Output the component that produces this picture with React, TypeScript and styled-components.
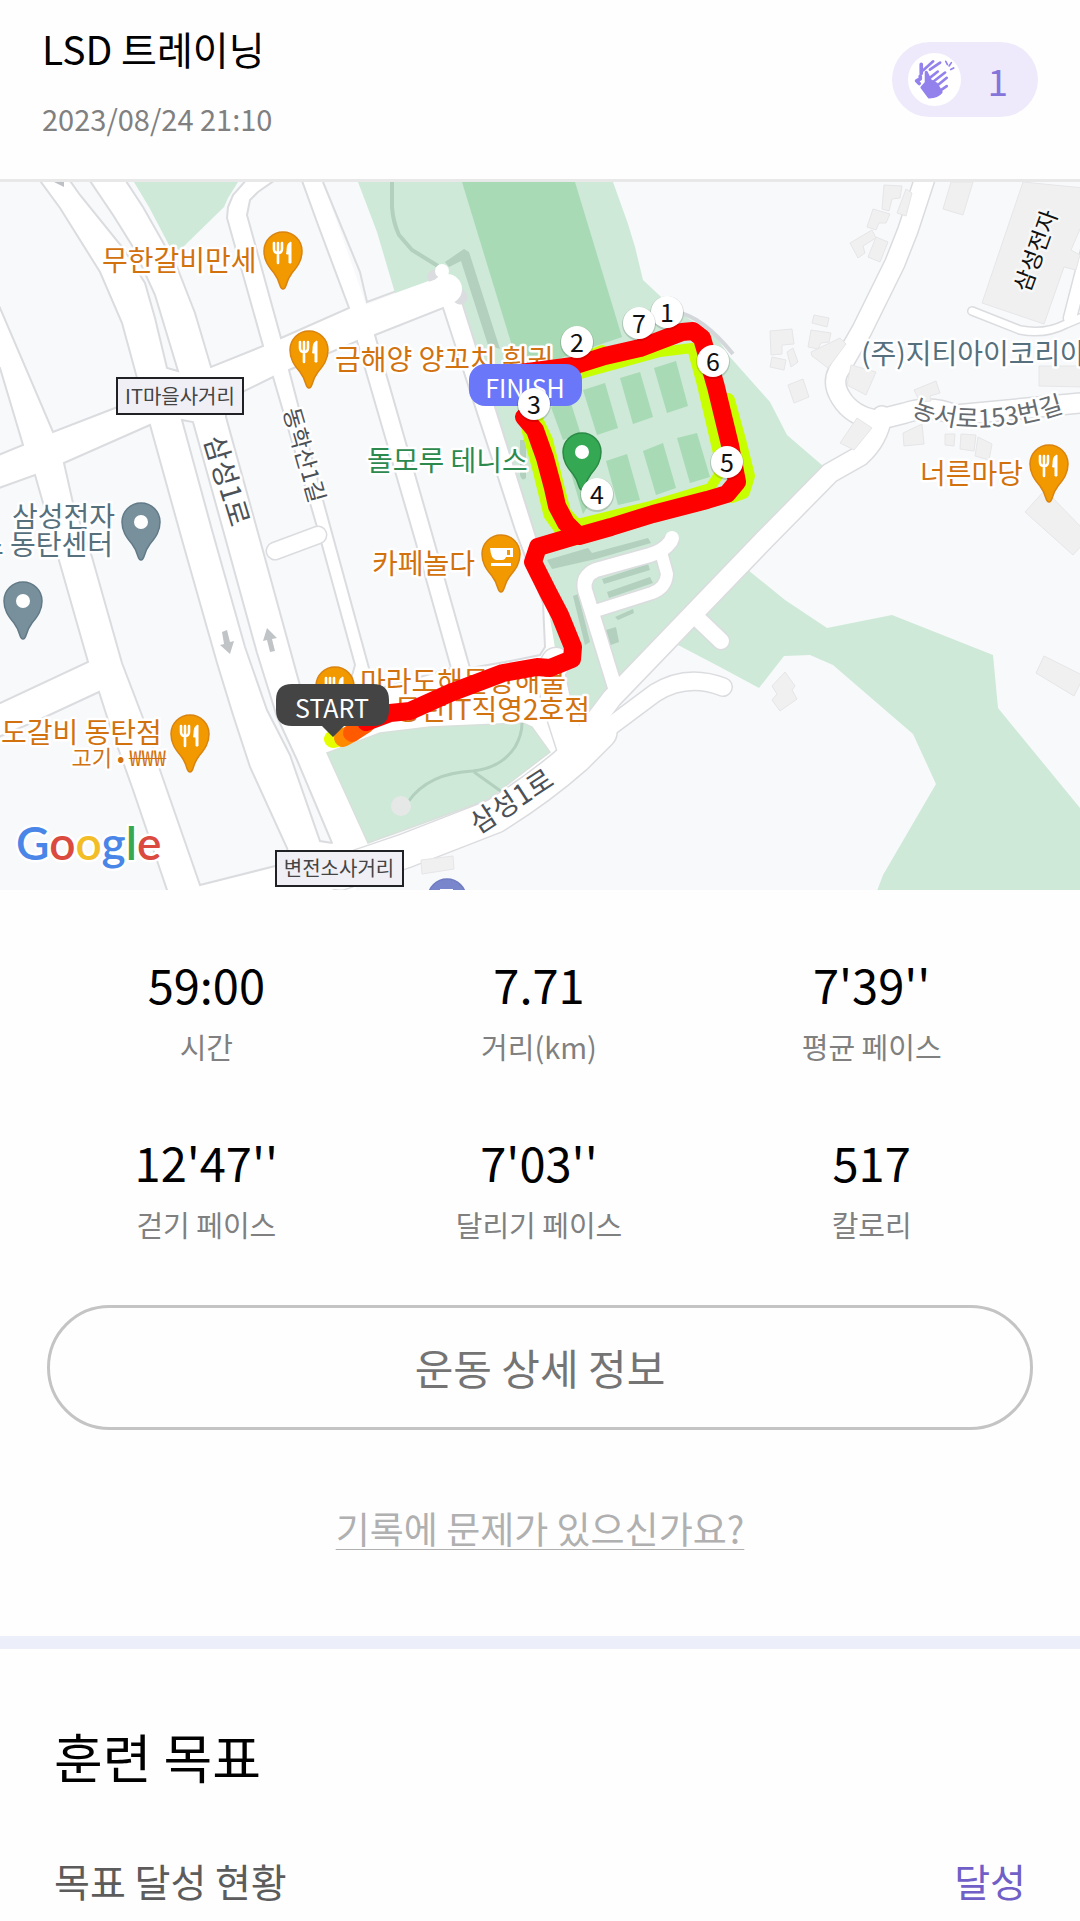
import React from 'react';
import styled, { createGlobalStyle } from 'styled-components';

const GlobalStyle = createGlobalStyle`
  * { box-sizing: border-box; }
  body {
    margin: 0;
    background: #fefefe;
    color: #000;
    font-family: "Noto Sans CJK KR", "Noto Sans", sans-serif;
  }
`;

const Page = styled.main`
  width: 100%;
  overflow: hidden;
`;

const Header = styled.header`
  display: flex;
  justify-content: space-between;
  align-items: flex-start;
  padding: 18px 42px 39px;
  border-bottom: 3px solid #e8e8e8;
`;

const HeaderText = styled.div`
  display: flex;
  flex-direction: column;
  gap: 18px;
`;

const Title = styled.h1`
  margin: 0;
  font-size: 39px;
  line-height: 60px;
  font-weight: 400;
`;

const DateText = styled.time`
  font-size: 29px;
  line-height: 44px;
  color: #808080;
`;

const CheerButton = styled.button`
  display: flex;
  align-items: center;
  gap: 26px;
  height: 75px;
  margin: 24px 0 0;
  padding: 0 30px 0 16px;
  border: 0;
  border-radius: 38px;
  background: #eeeafc;
  color: #8575db;
  font-family: inherit;
  font-size: 37px;
  line-height: 54px;
`;

const ClapBadge = styled.span`
  display: flex;
  width: 53px;
  height: 53px;
  border-radius: 50%;
  background: #fff;
`;

const MapFigure = styled.figure`
  margin: 0;
  background: #f8f9fb;
`;

const MapSvg = styled.svg`
  display: block;
  width: 100%;
  height: auto;
`;

const MapText = styled.text<{ $size?: number; $color: string; $halo?: string }>`
  font-size: ${(p) => p.$size ?? 28}px;
  font-weight: 400;
  fill: ${(p) => p.$color};
  stroke: ${(p) => p.$halo ?? '#fff'};
  stroke-width: 5px;
  stroke-linejoin: round;
  paint-order: stroke;
`;

const PlainText = styled.text<{ $size: number; $color: string }>`
  font-size: ${(p) => p.$size}px;
  fill: ${(p) => p.$color};
  text-anchor: middle;
`;

const LogoText = styled.text`
  font-family: Lato, "Open Sans", sans-serif;
  font-size: 46px;
  font-weight: 600;
  stroke: #fff;
  stroke-width: 5px;
  stroke-linejoin: round;
  paint-order: stroke;
`;

const Summary = styled.section`
  display: flex;
  flex-direction: column;
  padding: 62px 0 81px;
`;

const Stats = styled.dl`
  display: grid;
  grid-template-columns: repeat(3, 1fr);
  row-gap: 62px;
  margin: 0;
  padding: 0 42px 0 40px;
`;

const Stat = styled.div`
  display: flex;
  flex-direction: column-reverse;
  align-items: center;
  gap: 8px;
`;

const StatLabel = styled.dt`
  font-size: 29px;
  line-height: 44px;
  color: #808080;
`;

const StatValue = styled.dd`
  margin: 0;
  font-size: 47px;
  line-height: 64px;
`;

const DetailButton = styled.button`
  height: 125px;
  margin: 59px 47px 0;
  padding: 0 0 2px;
  border: 3px solid #c4c4c4;
  border-radius: 63px;
  background: #fefefe;
  color: #747474;
  font-family: inherit;
  font-size: 42px;
  line-height: 60px;
`;

const HelpLink = styled.a`
  align-self: center;
  margin-top: 71px;
  color: #b0b0b0;
  font-size: 37px;
  line-height: 54px;
  text-decoration: underline;
  text-decoration-thickness: 1px;
  text-underline-offset: 5px;
  text-decoration-skip-ink: none;
`;

const Goal = styled.section`
  display: flex;
  flex-direction: column;
  gap: 58px;
  padding: 69px 54px 13px;
  border-top: 13px solid #eceffa;
`;

const GoalTitle = styled.h2`
  margin: 0;
  font-size: 53px;
  line-height: 76px;
  font-weight: 400;
`;

const GoalRow = styled.div`
  display: flex;
  justify-content: space-between;
  font-size: 39px;
  line-height: 56px;
  color: #5c5c5c;
`;

const GoalState = styled.strong`
  font-weight: 400;
  color: #705fc6;
`;

const stats = [
  { value: '59:00', label: '시간' },
  { value: '7.71', label: '거리(km)' },
  { value: "7'39''", label: '평균 페이스' },
  { value: "12'47''", label: '걷기 페이스' },
  { value: "7'03''", label: '달리기 페이스' },
  { value: '517', label: '칼로리' },
];

const ORANGE = '#d1720f';
const SLATE = '#56707d';
const ROAD_TEXT = '#4b5157';
const PARK = '#cee9d7';
const FIELD = '#a8dab5';
const SHADE = '#b3cfbe';
const EDGE = '#dbdcdf';

const blocks = [
  '-4,178 38,178 60,208 100,272 122,323 137,378 140,398 115,408 53,432 0,308 -4,300',
  '-4,365 0,368 23,445 -4,456',
  '-4,489 35,475 43,503 58,557 88,662 -4,705',
  '64,463 150,425 182,540 217,663 233,715 250,767 287,848 291,862 200,885 160,770 143,718 122,663 92,557 73,503',
  '-4,738 43,718 99,692 108,720 133,790 168,893 -4,893',
  '68,178 80,195 123,248 145,283 155,318 167,368 178,371 155,295 133,247 113,215 88,178',
  '182,420 193,422 223,530 257,653 277,717 297,760 332,843 320,841 290,755 267,710 253,670 245,647 212,530',
  '124,178 143,207 177,267 195,313 211,367 263,346 227,218 228,207 233,195 248,178',
  '247,215 250,200 258,192 278,178 301,178 318,225 349,308 281,338',
  '226,400 273,377 317,527 355,665 345,700 304,700 260,540 226,417',
  '289,370 357,341 415,540 451,668 375,690 323,500',
  '375,335 443,308 515,530 543,603 545,647 540,655 505,662 470,668 431,530',
];

const buildings = [
  '884,185 902,186 900,198 892,199 889,211 882,209',
  '906,189 912,193 906,216 897,213',
  '873,209 890,214 886,223 879,223 876,230 867,227',
  '850,243 872,230 876,238 863,246 865,253 858,258',
  '876,237 888,242 880,262 868,257',
  '951,182 973,182 963,215 943,209',
  '1023,182 1084,188 1084,220 1071,250 1080,255 1076,270 1064,267 1044,324 982,303',
  '770,331 792,329 794,344 782,345 782,354 771,355',
  '814,315 829,318 827,327 812,323',
  '811,330 831,333 829,342 821,343 818,349 808,347',
  '787,352 793,348 798,362 791,367',
  '772,357 786,360 784,370 770,367',
  '788,385 803,379 809,397 794,403',
  '811,352 840,338 846,344 828,368 812,356',
  '851,365 876,372 866,395 847,385',
  '914,390 936,381 940,393 930,396 931,401 920,402',
  '857,418 872,428 854,450 840,443',
  '1039,366 1084,366 1084,387 1039,386',
  '903,433 922,424 924,444 904,446',
  '945,434 955,434 954,446 945,445',
  '961,434 976,435 974,451 960,449',
  '978,437 992,444 989,460 975,456',
  '1045,490 1025,512 1073,555 1084,543 1084,530',
  '785,672 795,686 792,690 797,699 780,711 772,700 777,694 772,686',
  '1044,656 1084,676 1074,696 1036,673',
  '421,860 453,856 454,869 422,874',
];

const courts = [
  '551,407 570,400 581,435 563,440',
  '583,390 605,383 618,428 597,435',
  '620,378 640,372 653,417 633,424',
  '654,368 676,361 688,406 667,413',
  '606,461 627,454 640,500 618,505',
  '643,451 663,443 676,488 656,495',
  '677,438 697,433 710,477 690,483',
  '570,470 592,500 583,514',
];

const roads = [
  { d: 'M926 175 L908 230 L895 263 L862 330 L838 372 Q832 384 841 398 Q852 416 876 420 Q890 417 905 413 Q930 404 955 415 L1090 402', w: 19 },
  { d: 'M882 416 Q878 440 860 456 L830 473 L765 539 L612 698 L585 734', w: 19 },
  { d: 'M588 743 L655 693 Q687 673 723 687', w: 17 },
  { d: 'M698 619 L721 641', w: 16 },
  { d: 'M556 662 L550 672 L556 700 L572 750', w: 28 },
  { d: 'M340 873 L405 851 L495 816 Q540 788 575 757 L600 732', w: 33 },
  { d: 'M671 541 Q664 551 650 555 L596 570 Q582 576 585 590 L617 694', w: 14 },
  { d: 'M661 552 L667 574 Q666 588 652 593 L592 612', w: 12 },
  { d: 'M972 311 L1020 330 Q1045 335 1066 324 L1090 314', w: 7 },
  { d: 'M1090 240 L1070 318', w: 12 },
  { d: 'M275 551 L318 535', w: 16 },
];

const square =
  'M524 417 L535 430 L545 458 L553 488 L557 506 L566 523 L579 536 L611 527 L653 514 L707 500 L727 494 L737 482 L730 445 L716 387 L702 338 L693 331 L682 332 L640 348 L605 356 L573 366 L520 373';
const approach =
  'M366 722 L390 713 L410 711 L450 693 L503 673 L537 667 L550 668 L572 659 L573 647 L560 615 L548 592 L533 562 L538 547 L575 536';

const kilometres = [
  { n: 1, x: 667, y: 312 },
  { n: 7, x: 639, y: 323 },
  { n: 2, x: 577, y: 342 },
  { n: 6, x: 713, y: 361 },
  { n: 3, x: 534, y: 404 },
  { n: 5, x: 727, y: 462 },
  { n: 4, x: 597, y: 494 },
];

type PinKind = 'food' | 'cafe' | 'dot' | 'shop';

function Pin({ x, y, color, edge, kind }: { x: number; y: number; color: string; edge: string; kind: PinKind }) {
  return (
    <g transform={`translate(${x} ${y})`}>
      <path
        d="M0 38 C-4 38 -2 31 -9 22 C-15 15 -19 9 -19 0 A19 19 0 0 1 19 0 C19 9 15 15 9 22 C2 31 4 38 0 38 Z"
        fill={color}
        stroke={edge}
        strokeWidth="1.5"
      />
      {kind === 'dot' && <circle r="7" fill="#fff" />}
      {kind === 'food' && (
        <g stroke="#fff" fill="none" strokeLinecap="round">
          <path d="M-9 -8 V-2 Q-9 2 -5 2 Q-1 2 -1 -2 V-8 M-5 -8 V12" strokeWidth="2.6" />
          <path d="M4 -1 Q4 -8 8 -9 V12 H6 V3 H4 Z" fill="#fff" strokeWidth="1" />
        </g>
      )}
      {kind === 'cafe' && (
        <g fill="#fff">
          <path d="M-11 -6 H12 V3 H5 Q4 6 1 6 H-5 Q-10 5 -11 -6 Z" />
          <path d="M6 -4 H9 V1 H6 Z" fill={color} />
          <path d="M-10 9 H10 V12 H-10 Z" />
        </g>
      )}
      {kind === 'shop' && <path d="M-6 -8 H5 V0 H-6 Z M9 -8 V0" fill="#fff" stroke="#fff" strokeWidth="2" />}
    </g>
  );
}

const FoodPin = ({ x, y }: { x: number; y: number }) => (
  <Pin x={x} y={y} color="#f29900" edge="#d98310" kind="food" />
);

function ClapIcon() {
  return (
    <svg viewBox="147 98 158 160" width="53" height="53" aria-hidden="true">
      <g stroke="#9381ec" strokeLinecap="round" strokeLinejoin="round" fill="none">
        <path d="M186 132 V160 M183 168 V176 L172 182 L180 190" strokeWidth="11" />
        <path d="M192 150 L222 123 M212 148 L243 127" strokeWidth="8" />
        <path d="M201 156 V188 L188 202 L210 231 Q235 230 246 216 L232 192 L214 182 Z" fill="#9381ec" strokeWidth="9" />
        <path d="M208 176 L236 154 M218 188 L258 157 M230 200 L263 173 M240 214 L263 198" strokeWidth="8" />
        <path d="M260 123 L265 133 M270 137 L277 127 M275 148 L284 143" strokeWidth="5" />
      </g>
    </svg>
  );
}

function RouteMap() {
  return (
    <MapFigure>
      <MapSvg viewBox="0 182 1080 708" role="img" aria-label="운동 경로 지도">
        <rect x="0" y="182" width="1080" height="708" fill="#f8f9fb" />
        <path d="M0 182 H323 L366 305 L435 278 L462 300 L537 530 L560 610 L590 700 L560 760 L370 845 L355 891 H0 Z" fill="#fff" />
        <g fill="#f7f9fb" stroke={EDGE} strokeWidth="2">
          {blocks.map((points) => (
            <polygon key={points} points={points} />
          ))}
        </g>
        <path d="M134 182 H238 L228 198 L224 207 L180 250 L170 247 L149 207 Z" fill={PARK} />
        <path d="M323 182 L360 272 L367 302 L437 276" fill="none" stroke={EDGE} strokeWidth="2" />
        <path
          d="M358 182 H613 L628 224 L635 247 L643 280 L675 310 L715 335 L730 357 L770 402 L787 435 L823 466 L577 734 L562 690 L537 540 L461 297 L437 278 L395 293 L377 232 Z"
          fill={PARK}
        />
        <path d="M676 312 Q702 316 733 354" fill="none" stroke="#d3d7da" strokeWidth="4" />
        <path d="M462 182 H575 L622 337 L520 372 Z" fill={FIELD} />
        <path d="M392 182 V207 Q393 222 399 235 L412 250 L438 266" fill="none" stroke={SHADE} strokeWidth="4" />
        <path d="M445 262 L464 249 L469 252 L500 349 L488 345 L461 261 L449 267 Z" fill={SHADE} />
        <path d="M520 440 V475 Q522 482 526 478 V440 Z" fill={SHADE} />
        <path d="M435 277 L460 297" stroke={EDGE} strokeWidth="15" strokeLinecap="round" />
        <path d="M367 314 L444 286 L452 296" fill="none" stroke="#fff" strokeWidth="18" />
        <circle cx="447" cy="289" r="15" fill="#fff" />
        <circle cx="442" cy="271" r="7" fill="#fff" />
        <path d="M461 299 L537 540" stroke={EDGE} strokeWidth="2" />
        <g fill={FIELD}>
          {courts.map((points) => (
            <polygon key={points} points={points} />
          ))}
        </g>
        <path
          d="M748 570 L785 600 L827 628 L892 615 L993 655 L998 708 L1080 808 V891 H877 L883 875 L936 784 L913 734 L833 665 L810 655 L784 656 L759 688 L720 667 L678 645 Z"
          fill={PARK}
        />
        <path d="M547 560 L588 548 L592 553 L648 538 L651 543 L596 559 L552 569 Z" fill={SHADE} />
        <path d="M602 579 L648 564 L650 570 L604 584 Z M607 592 L650 577 L653 583 L609 598 Z M573 596 L578 594 L590 642 L585 645 Z M606 630 L616 627 L619 642 L608 646 Z M615 617 L633 609 L634 613 L618 620 Z M617 680 L622 680 L617 688 Z" fill={SHADE} />
        <path d="M327 753 L380 733 L430 727 L523 723 L532 727 L550 752 L520 775 L487 800 L368 843 Z" fill={PARK} stroke="#d8e0dc" strokeWidth="1.5" />
        <g fill="none" stroke={SHADE} strokeWidth="3">
          <path d="M408 802 Q428 773 473 771 Q501 768 515 747 Q522 735 522 723" />
          <path d="M474 772 L502 792" />
        </g>
        <circle cx="401" cy="806" r="10" fill="#e6e8e8" />
        <g fill="none" stroke={EDGE} strokeLinecap="round" strokeLinejoin="round">
          {roads.map((r) => (
            <path key={r.d} d={r.d} strokeWidth={r.w + 3} />
          ))}
        </g>
        <g fill="none" stroke="#fff" strokeLinecap="round" strokeLinejoin="round">
          {roads.map((r) => (
            <path key={r.d} d={r.d} strokeWidth={r.w} />
          ))}
        </g>
        <circle cx="672" cy="538" r="7" fill="#fff" />
        <path d="M310 850 L345 840 L362 860 L340 889 L322 889 Z" fill="#fff" />
        <g fill="#f0f0f0" stroke="#e6e6e8" strokeWidth="1">
          {buildings.map((points) => (
            <polygon key={points} points={points} />
          ))}
        </g>
        <path d="M54 182 H64 V187 Z" fill="#bdc1c6" />
        <g fill="#c0c4c7">
          <path d="M222 632 L227 630 L230 642 L234 641 L230 654 L220 645 L224 644 Z" />
          <path d="M267 628 L277 638 L272 639 L275 651 L270 652 L267 640 L263 641 Z" />
        </g>

        <FoodPin x={283} y={251} />
        <FoodPin x={309} y={350} />
        <FoodPin x={1049} y={464} />
        <FoodPin x={190} y={734} />
        <FoodPin x={335} y={686} />
        <Pin x={501} y={554} color="#f29900" edge="#d98310" kind="cafe" />
        <Pin x={141} y={522} color="#788f9c" edge="#627a87" kind="dot" />
        <Pin x={23} y={601} color="#788f9c" edge="#627a87" kind="dot" />
        <Pin x={582} y={452} color="#34a853" edge="#2a8a45" kind="dot" />
        <Pin x={447} y={898} color="#7986cb" edge="#6f7cc2" kind="shop" />

        <MapText x="102" y="271" $color={ORANGE}>무한갈비만세</MapText>
        <MapText x="335" y="370" $color={ORANGE}>금해양 양꼬치 훠궈</MapText>
        <MapText x="920" y="484" $color={ORANGE}>너른마당</MapText>
        <MapText x="372" y="574" $color={ORANGE}>카페놀다</MapText>
        <MapText x="360" y="692" $color={ORANGE}>마라도해물탕해물</MapText>
        <MapText x="395" y="720" $color={ORANGE}>동탄IT직영2호점</MapText>
        <MapText x="1" y="743" $color={ORANGE}>도갈비 동탄점</MapText>
        <MapText x="166" y="766" $size={22} $color={ORANGE} textAnchor="end">고기 • ₩₩₩</MapText>
        <MapText x="367" y="471" $color="#2d8a4e">돌모루 테니스</MapText>
        <MapText x="115" y="527" $color={SLATE} textAnchor="end">삼성전자</MapText>
        <MapText x="113" y="555" $color={SLATE} textAnchor="end">스 동탄센터</MapText>
        <MapText x="861" y="364" $color={SLATE}>(주)지티아이코리아</MapText>
        <MapText transform="translate(226 481) rotate(73)" y="9" $color={ROAD_TEXT} textAnchor="middle">삼성1로</MapText>
        <MapText transform="translate(304 455) rotate(74)" y="8" $size={23} $color={ROAD_TEXT} textAnchor="middle">동학산1길</MapText>
        <MapText transform="translate(512 802) rotate(-33)" y="9" $color={ROAD_TEXT} textAnchor="middle">삼성1로</MapText>
        <MapText transform="translate(1036 251) rotate(-70)" y="8" $size={23} $color="#111" $halo="#f7f7f7" textAnchor="middle">삼성전자</MapText>
        <path id="street" d="M911 415 Q975 442 1066 411" fill="none" />
        <MapText $size={25} $color="#666b70">
          <textPath href="#street">농서로153번길</textPath>
        </MapText>

        <g fill="#f0eff5" stroke="#202124" strokeWidth="2">
          <rect x="117" y="378" width="126" height="36" />
          <rect x="276" y="851" width="127" height="35" />
        </g>
        <PlainText x="180" y="404" $size={20} $color="#444">IT마을사거리</PlainText>
        <PlainText x="339" y="876" $size={20} $color="#444">변전소사거리</PlainText>

        <LogoText x="16" y="860">
          <tspan fill="#4a86e8">G</tspan>
          <tspan fill="#db4a3f">o</tspan>
          <tspan fill="#f2bd26">o</tspan>
          <tspan fill="#4a86e8">g</tspan>
          <tspan fill="#34a853">l</tspan>
          <tspan fill="#db4a3f">e</tspan>
        </LogoText>

        <g fill="none" strokeLinecap="round" strokeLinejoin="round">
          <g stroke="#c8ff00">
            <path d="M527 430 L538 470 L549 515 L562 533 L575 540" strokeWidth="11" />
            <path d="M536 415 L548 440 L559 485 L566 512 L577 524 L650 506 L710 488 L722 470 L702 385 L692 348 L660 352 L573 376" strokeWidth="10" />
            <path d="M728 400 L739 440 L748 476 L743 492 L732 496" strokeWidth="14" />
            <path d="M585 358 L602 351" strokeWidth="12" />
          </g>
          <path d="M333 739 L342 737" stroke="#e6ff00" strokeWidth="18" />
          <path d="M343 738 L352 733" stroke="#ff8a00" strokeWidth="18" />
          <path d="M352 733 L366 724" stroke="#ff5a00" strokeWidth="18" />
          <g stroke="#fe0000" strokeWidth="18">
            <path d={approach} />
            <path d={square} />
          </g>
        </g>

        <path d="M292 684 H373 Q389 684 389 700 V710 Q389 726 373 726 H344 L333 737 L322 726 H292 Q276 726 276 710 V700 Q276 684 292 684 Z" fill="#444" />
        <PlainText x="332" y="718" $size={25} $color="#fff">START</PlainText>
        <rect x="469" y="364" width="113" height="42" rx="16" fill="#6a77f8" />
        <PlainText x="525" y="398" $size={25} $color="#fff">FINISH</PlainText>
        {kilometres.map((k) => (
          <g key={k.n}>
            <circle cx={k.x} cy={k.y + 1} r="17" fill="#000" opacity="0.14" />
            <circle cx={k.x} cy={k.y} r="16" fill="#fff" />
            <PlainText x={k.x} y={k.y + 10} $size={25} $color="#111">{k.n}</PlainText>
          </g>
        ))}
      </MapSvg>
    </MapFigure>
  );
}

export default function App() {
  return (
    <Page>
      <GlobalStyle />
      <Header>
        <HeaderText>
          <Title>LSD 트레이닝</Title>
          <DateText dateTime="2023-08-24T21:10">2023/08/24 21:10</DateText>
        </HeaderText>
        <CheerButton type="button">
          <ClapBadge><ClapIcon /></ClapBadge>
          1
        </CheerButton>
      </Header>
      <RouteMap />
      <Summary>
        <Stats>
          {stats.map((s) => (
            <Stat key={s.label}>
              <StatLabel>{s.label}</StatLabel>
              <StatValue>{s.value}</StatValue>
            </Stat>
          ))}
        </Stats>
        <DetailButton type="button">운동 상세 정보</DetailButton>
        <HelpLink href="#help">기록에 문제가 있으신가요?</HelpLink>
      </Summary>
      <Goal>
        <GoalTitle>훈련 목표</GoalTitle>
        <GoalRow>
          <span>목표 달성 현황</span>
          <GoalState>달성</GoalState>
        </GoalRow>
      </Goal>
    </Page>
  );
}
